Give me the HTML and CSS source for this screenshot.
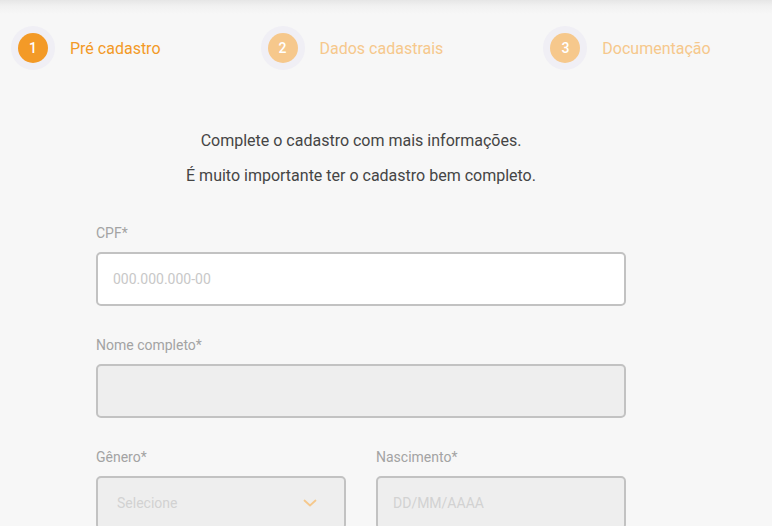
FILE: index.html
```html
<!DOCTYPE html>
<html lang="pt-BR">
<head>
<meta charset="utf-8">
<title>Pré cadastro</title>
<link rel="stylesheet" href="styles.css">
</head>
<body>
<header class="header">
  <ol class="steps">
    <li class="step step-active">
      <span class="step-halo"><span class="step-num">1</span></span>
      <span class="step-label">Pré cadastro</span>
    </li>
    <li class="step">
      <span class="step-halo"><span class="step-num">2</span></span>
      <span class="step-label">Dados cadastrais</span>
    </li>
    <li class="step">
      <span class="step-halo"><span class="step-num">3</span></span>
      <span class="step-label">Documentação</span>
    </li>
  </ol>
</header>
<main class="main">
  <div class="intro">
    <p>Complete o cadastro com mais informações.</p>
    <p>É muito importante ter o cadastro bem completo.</p>
  </div>
  <form class="form">
    <div class="field">
      <label class="label">CPF*</label>
      <input class="input" type="text" placeholder="000.000.000-00">
    </div>
    <div class="field">
      <label class="label">Nome completo*</label>
      <input class="input input-disabled" type="text" disabled>
    </div>
    <div class="row">
      <div class="field">
        <label class="label">Gênero*</label>
        <div class="input input-disabled select">
          <span class="select-text">Selecione</span>
          <svg class="chevron" width="14" height="8" viewBox="0 0 14 8"><path d="M1.5 1.5 L7 6.5 L12.5 1.5" fill="none" stroke="#f5c88c" stroke-width="1.8" stroke-linecap="round" stroke-linejoin="round"/></svg>
        </div>
      </div>
      <div class="field">
        <label class="label">Nascimento*</label>
        <input class="input input-disabled" type="text" placeholder="DD/MM/AAAA" disabled>
      </div>
    </div>
  </form>
</main>
</body>
</html>
```
FILE: styles.css
```css
* { box-sizing: border-box; }
html, body { margin: 0; padding: 0; }
body {
  background: #f7f7f7;
  font-family: Roboto, "Liberation Sans", sans-serif;
  color: #454545;
  overflow: hidden;
}
.header {
  background: linear-gradient(to bottom, #e6e6e6 0, #f1f1f1 6px, #f7f7f7 14px);
  padding-top: 26px;
  padding-left: 11px;
}
.steps {
  list-style: none;
  margin: 0;
  padding: 0;
  display: flex;
  gap: 100px;
}
.step {
  display: flex;
  align-items: center;
  gap: 15px;
}
.step-halo {
  width: 44px;
  height: 44px;
  border-radius: 50%;
  background: #f0eff5;
  display: flex;
  align-items: center;
  justify-content: center;
}
.step-num {
  width: 30px;
  height: 30px;
  border-radius: 50%;
  background: #f6c88c;
  color: #fff;
  font-size: 14px;
  font-weight: 500;
  display: flex;
  align-items: center;
  justify-content: center;
}
.step-label {
  font-size: 16px;
  color: #f6c88c;
}
.step-active .step-num { background: #f39a27; }
.step-active .step-label { color: #f39a27; }
.main {
  width: 722px;
  padding-top: 53px;
}
.intro {
  text-align: center;
  font-size: 16px;
  line-height: 35px;
  color: #454545;
}
.intro p { margin: 0; }
.form {
  width: 530px;
  margin: 30px auto 0;
  display: flex;
  flex-direction: column;
}
.field {
  display: flex;
  flex-direction: column;
  margin-bottom: 29px;
}
.label {
  font-size: 14px;
  line-height: 20px;
  color: #a3a3a3;
  margin-bottom: 9px;
}
.input {
  height: 54px;
  width: 100%;
  border: 2px solid #c2c2c2;
  border-radius: 5px;
  background: #fff;
  padding: 0 15px;
  font-family: Roboto, "Liberation Sans", sans-serif;
  font-size: 14px;
  color: #454545;
  outline: none;
}
.input::placeholder { color: #c8c8c8; }
.input-disabled { background: #eeeeee; }
.input-disabled::placeholder { color: #d2d2d2; }
.row {
  display: grid;
  grid-template-columns: 250px 250px;
  gap: 30px;
}
.select {
  display: flex;
  align-items: center;
  justify-content: space-between;
  padding: 0 27px 0 19px;
}
.select-text { color: #d2d2d2; font-size: 14px; }
.chevron { display: block; }
```
